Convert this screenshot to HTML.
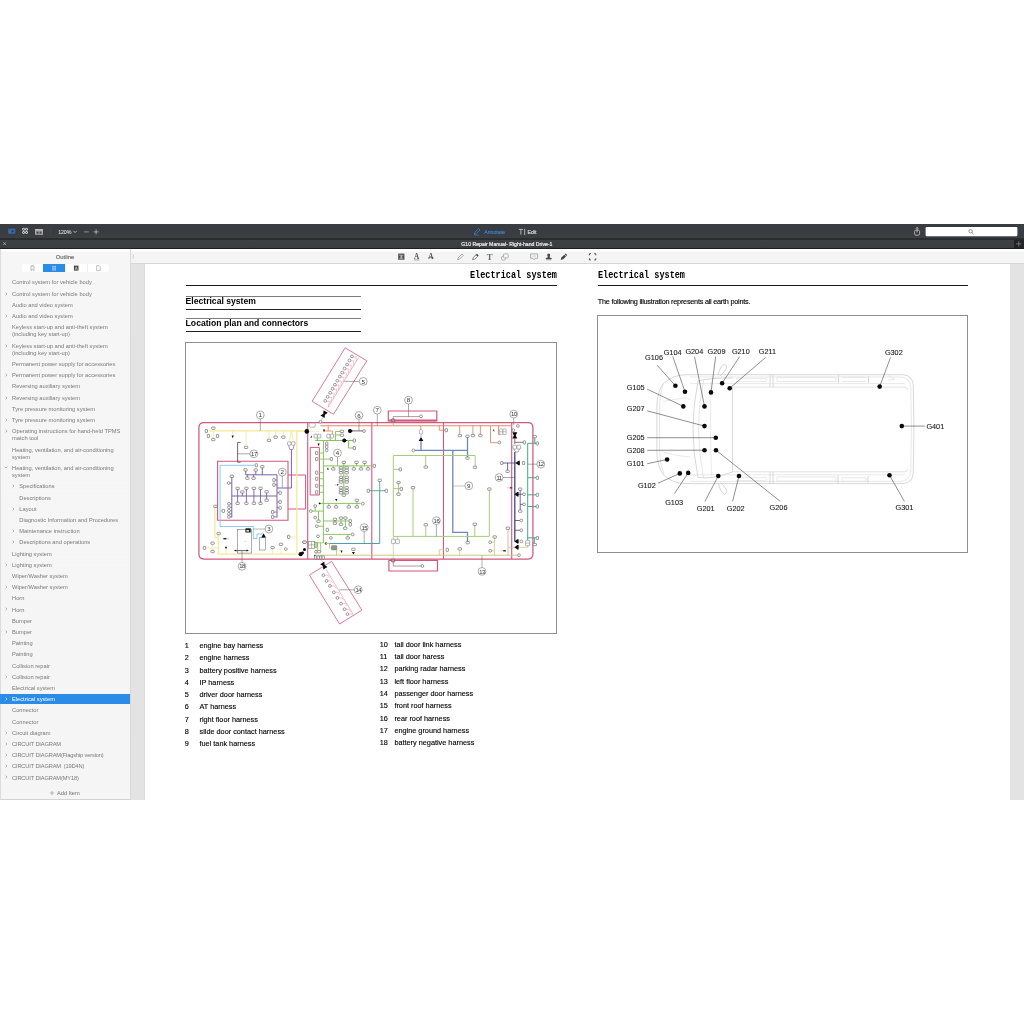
<!DOCTYPE html>
<html><head><meta charset="utf-8"><title>G10 Repair Manual</title>
<style>
html,body{margin:0;padding:0;background:#fff;}
body{width:1024px;height:1024px;position:relative;overflow:hidden;font-family:"Liberation Sans",sans-serif;}
.abs{position:absolute;}
#tb{position:absolute;left:0;top:224px;width:1024px;height:14.6px;background:linear-gradient(#393c40 0,#393c40 70%,#3d4143 100%);}
#tbsep{position:absolute;left:0;top:238.4px;width:1024px;height:1.3px;background:#2a2d2e;}
#tabs{position:absolute;left:0;top:239.7px;width:1024px;height:8.3px;background:linear-gradient(#3d4144,#3b3c40);}
#tabsep{position:absolute;left:0;top:247.8px;width:1024px;height:1px;background:#1f1f24;}
#side{position:absolute;left:0;top:248.8px;width:130.5px;height:551px;background:linear-gradient(#fff 0,#fff 2.2px,#f6f6f6 3.2px,#f5f5f5 100%);border-bottom:0.7px solid #d4d4d4;border-right:0.6px solid #d8d8d8;box-sizing:border-box;border-left:1px solid #dcdcdc;}
#gut{position:absolute;left:130.4px;top:263.8px;width:14.3px;box-sizing:border-box;border-right:1px solid #d9d9d9;height:536.2px;background:#e3e3e3;}
#gutr{position:absolute;left:1009.6px;top:263.8px;width:14.4px;height:536.2px;background:#e3e3e3;}
#atb{position:absolute;left:130.4px;top:248.8px;width:893.6px;height:15px;background:linear-gradient(#fff 0,#fff 2.2px,#f4f4f5 3px,#f4f4f5 100%);border-bottom:0.6px solid #d6d6d6;box-sizing:border-box;}
#doc{position:absolute;left:144.5px;top:263.8px;width:865px;height:536.2px;background:#fff;}
.row{position:absolute;left:0;width:129px;height:11.2px;line-height:11.2px;font-size:5.72px;color:#7a7a7a;white-space:nowrap;}
.row span{position:absolute;left:12px;top:0;}
.row.i2 span{left:19.3px;}
.row.d{height:18.67px;}
.row.d span{line-height:7.45px;top:1.9px;}
.row .ch{position:absolute;left:4.6px;top:0;font-size:4px;color:#8a8a8a;}
.row.i2 .ch{left:12px;}
.row.sel{background:#2a8be8;color:#fff;}
.row.sel .ch{color:#fff;}
.t{position:absolute;white-space:nowrap;color:#000;}
#wrap{position:absolute;left:0;top:0;width:1024px;height:1024px;will-change:transform;}
.st{position:absolute;white-space:nowrap;font-size:5.72px;line-height:11.2px;height:11.2px;}
</style></head><body><div id="wrap">
<div id="tb"></div><div id="tbsep"></div><div id="tabs"></div><div id="tabsep"></div>
<!-- top toolbar icons -->
<svg class="abs" style="left:0;top:224px" width="1024" height="25" viewBox="0 224 1024 25">
 <!-- sidebar icon (blue) -->
 <rect x="8" y="228.6" width="7.5" height="5.5" rx="0.8" fill="#325f94"/>
 <rect x="8.9" y="229.6" width="5.8" height="0.7" fill="#4f7fb5" opacity="0.8"/><rect x="8.9" y="231" width="2.2" height="0.7" fill="#4f7fb5" opacity="0.8"/><rect x="8.9" y="232.4" width="5.8" height="0.7" fill="#4f7fb5" opacity="0.7"/>
 <rect x="11.7" y="230.3" width="1.3" height="2.1" fill="#1d3558"/>
 <!-- grid icon -->
 <g fill="none" stroke="#cdcdcd" stroke-width="0.95">
  <rect x="22.6" y="228.3" width="1.9" height="1.9" rx="0.3"/><rect x="25.6" y="228.3" width="1.9" height="1.9" rx="0.3"/>
  <rect x="22.6" y="231.5" width="1.9" height="1.9" rx="0.3"/><rect x="25.6" y="231.5" width="1.9" height="1.9" rx="0.3"/>
 </g>
 <!-- two page icon -->
 <rect x="35" y="229" width="8" height="5.8" fill="#a9a9a9"/>
 <rect x="35" y="229" width="8" height="1.2" fill="#bcbcbc"/>
 <rect x="36.5" y="231.5" width="2.1" height="2.2" fill="#45484b"/><rect x="39.5" y="231.5" width="2.1" height="2.2" fill="#45484b"/>
 <rect x="50.6" y="227" width="0.5" height="9" fill="#4b4e51"/>
 <!-- chevron -->
 <path d="M73.4 230.9 L75.1 232.6 L76.8 230.9" fill="none" stroke="#d0d0d0" stroke-width="0.8"/>
 <!-- minus plus -->
 <path d="M84 231.9 H88.8" stroke="#b4b4b4" stroke-width="0.7"/>
 <path d="M93.6 231.9 H98.6 M96.1 229.4 V234.4" stroke="#cfcfcf" stroke-width="0.7"/>
 <!-- annotate pencil -->
 <path d="M474.3 234.3 L474.9 232.2 L478.6 228.6 L480 230 L476.4 233.7 Z" fill="none" stroke="#3b7fc8" stroke-width="0.8" stroke-linejoin="round"/>
 <path d="M474 235.1 H479" stroke="#3b7fc8" stroke-width="0.6"/>
 <!-- T| -->
 <path d="M518.8 229.4 H523 M520.9 229.4 V234.6 M524.7 228.8 V235" stroke="#d4d4d4" stroke-width="0.8" fill="none"/>
 <!-- share -->
 <rect x="914.6" y="230.2" width="5" height="5" rx="1.4" fill="none" stroke="#c6c6c6" stroke-width="0.8"/>
 <path d="M917.1 227.4 V232.4 M915.8 228.7 L917.1 227.4 L918.4 228.7" stroke="#c6c6c6" stroke-width="0.8" fill="none"/>
 <!-- search box -->
 <rect x="925.6" y="226.9" width="91.8" height="9.3" rx="1.2" fill="#fff"/>
 <circle cx="970.6" cy="231.2" r="1.7" fill="none" stroke="#6a6a6a" stroke-width="0.7"/>
 <path d="M971.9 232.5 L973.6 234.2" stroke="#6a6a6a" stroke-width="0.8"/>
 <!-- tab close x -->
 <path d="M3.3 242.3 L6 245 M6 242.3 L3.3 245" stroke="#c2c2c2" stroke-width="0.7"/>
 <!-- tab plus -->
 <rect x="1014" y="239.7" width="10" height="8.2" fill="#222426"/>
 <path d="M1016.3 243.9 H1021.3 M1018.8 241.4 V246.4" stroke="#858585" stroke-width="0.8"/>
</svg>
<div class="t" style="left:58.2px;top:229px;font-size:5.3px;line-height:7px;color:#e0e0e0;letter-spacing:-0.12px;-webkit-text-stroke:0.06px #e0e0e0">120%</div>
<div class="t" style="left:484.2px;top:229px;font-size:5.2px;line-height:7px;color:#3b7fc8;-webkit-text-stroke:0.2px #3b7fc8;">Annotate</div>
<div class="t" style="left:527.6px;top:229px;font-size:5.2px;line-height:7px;color:#d4d4d4;-webkit-text-stroke:0.2px #d4d4d4;">Edit</div>
<div class="t" style="left:461.3px;top:240.8px;font-size:5.17px;line-height:7px;color:#f0f0f0;-webkit-text-stroke:0.18px #f0f0f0;">G10 Repair Manual- Right-hand Drive-1</div>
<div id="atb"></div>
<svg class="abs" style="left:130px;top:249px" width="894" height="15" viewBox="130 249 894 15">
 <!-- grip -->
 <path d="M133.2 254.3 V258.6" stroke="#c4c4c4" stroke-width="0.7"/>
 <!-- highlight box -->
 <rect x="398.2" y="253.6" width="6.2" height="6.2" fill="#4a4a4a"/>
 <path d="M399.2 255.2 H403.4 M400 257 H402.6 M401.3 255.2 V258.6 M399.3 258.8 H403.3" stroke="#f3f3f3" stroke-width="0.6"/>
 <!-- A underline -->
 <text x="416.6" y="259" font-family="Liberation Serif" font-weight="bold" font-size="7.2" text-anchor="middle" fill="#505050">A</text>
 <path d="M414 259.9 H419.2" stroke="#505050" stroke-width="0.5"/>
 <!-- A strike -->
 <text x="430.9" y="259.4" font-family="Liberation Serif" font-weight="bold" font-size="7.2" text-anchor="middle" fill="#505050">A</text>
 <path d="M428.2 257.5 H433.6" stroke="#505050" stroke-width="0.6"/>
 <!-- pencil -->
 <path d="M457.6 259.8 L458 258 L462 254 L463.3 255.3 L459.3 259.3 Z" fill="none" stroke="#8a8a8a" stroke-width="0.65" stroke-linejoin="round"/>
 <!-- marker -->
 <path d="M472.7 259.7 L473.1 257.7 L476 254.8 L477.6 256.4 L474.7 259.3 Z" fill="none" stroke="#555" stroke-width="0.7" stroke-linejoin="round"/>
 <path d="M476 254.8 L477 253.8 L478.6 255.4 L477.6 256.4 Z" fill="#444"/>
 <!-- T -->
 <text x="489.7" y="260" font-family="Liberation Serif" font-weight="bold" font-size="8.6" text-anchor="middle" fill="#6a6a6a">T</text>
 <!-- shapes -->
 <circle cx="503.5" cy="258.1" r="2.2" fill="none" stroke="#8a8a8a" stroke-width="0.6"/>
 <rect x="503.6" y="253.9" width="4.6" height="4" rx="0.6" fill="#f6f6f6" stroke="#8a8a8a" stroke-width="0.6"/>
 <!-- comment -->
 <path d="M530.6 253.9 H537.6 V258.3 H535.2 L534.1 259.8 L533 258.3 H530.6 Z" fill="none" stroke="#8a8a8a" stroke-width="0.65" stroke-linejoin="round"/>
 <path d="M532.4 256.1 H535.8" stroke="#aaa" stroke-width="0.5"/>
 <!-- stamp -->
 <circle cx="548.7" cy="255.1" r="1.5" fill="#4a4a4a"/>
 <path d="M547.8 256 H549.6 L550 258 H547.4 Z" fill="#4a4a4a"/>
 <rect x="545.8" y="257.8" width="5.8" height="1.3" fill="#4a4a4a"/><rect x="546.2" y="259.6" width="5" height="0.5" fill="#4a4a4a"/>
 <!-- sign pen -->
 <path d="M560.7 259.9 L561.4 257.6 L564.3 254.7 L566 256.4 L563.1 259.3 Z" fill="#444"/>
 <path d="M564.6 254.3 L565.6 253.4 L567.2 255 L566.3 256 Z" fill="#444"/>
 <!-- select -->
 <g stroke="#3e3e3e" stroke-width="0.9" fill="none">
  <path d="M589.4 255.3 V253.7 H591 M594.2 253.7 H595.8 V255.3 M595.8 258.3 V259.9 H594.2 M591 259.9 H589.4 V258.3"/>
 </g>
</svg>
<div id="gut"></div><div id="gutr"></div><div id="doc"></div>
<div id="side"></div>
<div class="t" style="left:55.8px;top:253.6px;font-size:5.8px;line-height:7px;color:#5a5a5a;-webkit-text-stroke:0.1px #5a5a5a;">Outline</div>
<div class="abs" style="left:22px;top:264.2px;width:86.6px;height:8px;background:#fff;border-radius:1.2px;box-shadow:0 0 0.6px #cfcfcf;"></div>
<div class="abs" style="left:43.2px;top:264.2px;width:21.8px;height:8px;background:#2a8be8;"></div>
<div class="abs" style="left:65px;top:264.2px;width:0.5px;height:8px;background:#efefef;"></div><div class="abs" style="left:86.8px;top:264.2px;width:0.5px;height:8px;background:#efefef;"></div>
<svg class="abs" style="left:22px;top:264px" width="87" height="9" viewBox="22 264 87 9">
<path d="M31 265.8 H34 V270.6 L32.5 269.5 L31 270.6 Z" fill="none" stroke="#8a8a8a" stroke-width="0.6"/>
<path d="M52.2 266.5 H56 M52.2 268.2 H56 M52.2 269.9 H56 M53 265.8 V270.6 M55.2 265.8 V270.6" stroke="#cfe4fa" stroke-width="0.55" fill="none"/>
<rect x="73.9" y="265.6" width="4.6" height="5" fill="#444"/><path d="M75 269.9 L76.2 266.7 L77.4 269.9 M75.5 268.8 H76.9" stroke="#fff" stroke-width="0.5" fill="none"/>
<path d="M96.6 265.7 H99 L100.2 266.9 V270.6 H96.6 Z" fill="none" stroke="#9a9a9a" stroke-width="0.6"/>
</svg>
<div class="st" style="left:12px;top:277px;color:#7a7a7a">Control system for vehicle body</div>
<div class="st" style="left:12px;top:289px;color:#7a7a7a">Control system for vehicle body</div>
<svg class="abs" style="left:4.6px;top:291.60px" width="3" height="4" viewBox="0 0 3 4"><path d="M0.6 0.6 L2 2 L0.6 3.4" fill="none" stroke="#8a8a8a" stroke-width="0.6"/></svg>
<div class="st" style="left:12px;top:300px;color:#7a7a7a">Audio and video system</div>
<div class="st" style="left:12px;top:311px;color:#7a7a7a">Audio and video system</div>
<svg class="abs" style="left:4.6px;top:314.00px" width="3" height="4" viewBox="0 0 3 4"><path d="M0.6 0.6 L2 2 L0.6 3.4" fill="none" stroke="#8a8a8a" stroke-width="0.6"/></svg>
<div class="st" style="left:12px;top:322px;color:#7a7a7a">Keyless start-up and anti-theft system</div>
<div class="st" style="left:12px;top:329px;color:#7a7a7a">(including key start-up)</div>
<div class="st" style="left:12px;top:341px;color:#7a7a7a">Keyless start-up and anti-theft system</div>
<div class="st" style="left:12px;top:348px;color:#7a7a7a">(including key start-up)</div>
<svg class="abs" style="left:4.6px;top:343.57px" width="3" height="4" viewBox="0 0 3 4"><path d="M0.6 0.6 L2 2 L0.6 3.4" fill="none" stroke="#8a8a8a" stroke-width="0.6"/></svg>
<div class="st" style="left:12px;top:359px;color:#7a7a7a">Permanent power supply for accessories</div>
<div class="st" style="left:12px;top:370px;color:#7a7a7a">Permanent power supply for accessories</div>
<svg class="abs" style="left:4.6px;top:373.14px" width="3" height="4" viewBox="0 0 3 4"><path d="M0.6 0.6 L2 2 L0.6 3.4" fill="none" stroke="#8a8a8a" stroke-width="0.6"/></svg>
<div class="st" style="left:12px;top:381px;color:#7a7a7a">Reversing auxiliary system</div>
<div class="st" style="left:12px;top:393px;color:#7a7a7a">Reversing auxiliary system</div>
<svg class="abs" style="left:4.6px;top:395.54px" width="3" height="4" viewBox="0 0 3 4"><path d="M0.6 0.6 L2 2 L0.6 3.4" fill="none" stroke="#8a8a8a" stroke-width="0.6"/></svg>
<div class="st" style="left:12px;top:404px;color:#7a7a7a">Tyre pressure monitoring system</div>
<div class="st" style="left:12px;top:415px;color:#7a7a7a">Tyre pressure monitoring system</div>
<svg class="abs" style="left:4.6px;top:417.94px" width="3" height="4" viewBox="0 0 3 4"><path d="M0.6 0.6 L2 2 L0.6 3.4" fill="none" stroke="#8a8a8a" stroke-width="0.6"/></svg>
<div class="st" style="left:12px;top:426px;color:#7a7a7a">Operating instructions for hand-held TPMS</div>
<div class="st" style="left:12px;top:433px;color:#7a7a7a">match tool</div>
<svg class="abs" style="left:4.6px;top:429.14px" width="3" height="4" viewBox="0 0 3 4"><path d="M0.6 0.6 L2 2 L0.6 3.4" fill="none" stroke="#8a8a8a" stroke-width="0.6"/></svg>
<div class="st" style="left:12px;top:445px;color:#7a7a7a">Heating, ventilation, and air-conditioning</div>
<div class="st" style="left:12px;top:452px;color:#7a7a7a">system</div>
<div class="st" style="left:12px;top:463px;color:#7a7a7a">Heating, ventilation, and air-conditioning</div>
<div class="st" style="left:12px;top:470px;color:#7a7a7a">system</div>
<svg class="abs" style="left:3.8999999999999995px;top:466.38px" width="4" height="3" viewBox="0 0 4 3"><path d="M0.6 0.6 L2 2 L3.4 0.6" fill="none" stroke="#8a8a8a" stroke-width="0.6"/></svg>
<div class="st" style="left:19.3px;top:481px;color:#7a7a7a">Specifications</div>
<svg class="abs" style="left:12px;top:484.25px" width="3" height="4" viewBox="0 0 3 4"><path d="M0.6 0.6 L2 2 L0.6 3.4" fill="none" stroke="#8a8a8a" stroke-width="0.6"/></svg>
<div class="st" style="left:19.3px;top:493px;color:#7a7a7a">Descriptions</div>
<div class="st" style="left:19.3px;top:504px;color:#7a7a7a">Layout</div>
<svg class="abs" style="left:12px;top:506.65px" width="3" height="4" viewBox="0 0 3 4"><path d="M0.6 0.6 L2 2 L0.6 3.4" fill="none" stroke="#8a8a8a" stroke-width="0.6"/></svg>
<div class="st" style="left:19.3px;top:515px;color:#7a7a7a">Diagnostic Information and Procedures</div>
<div class="st" style="left:19.3px;top:526px;color:#7a7a7a">Maintenance instruction</div>
<svg class="abs" style="left:12px;top:529.05px" width="3" height="4" viewBox="0 0 3 4"><path d="M0.6 0.6 L2 2 L0.6 3.4" fill="none" stroke="#8a8a8a" stroke-width="0.6"/></svg>
<div class="st" style="left:19.3px;top:537px;color:#7a7a7a">Descriptions and operations</div>
<svg class="abs" style="left:12px;top:540.25px" width="3" height="4" viewBox="0 0 3 4"><path d="M0.6 0.6 L2 2 L0.6 3.4" fill="none" stroke="#8a8a8a" stroke-width="0.6"/></svg>
<div class="st" style="left:12px;top:549px;color:#7a7a7a">Lighting system</div>
<div class="st" style="left:12px;top:560px;color:#7a7a7a">Lighting system</div>
<svg class="abs" style="left:4.6px;top:562.65px" width="3" height="4" viewBox="0 0 3 4"><path d="M0.6 0.6 L2 2 L0.6 3.4" fill="none" stroke="#8a8a8a" stroke-width="0.6"/></svg>
<div class="st" style="left:12px;top:571px;color:#7a7a7a">Wiper/Washer system</div>
<div class="st" style="left:12px;top:582px;color:#7a7a7a">Wiper/Washer system</div>
<svg class="abs" style="left:4.6px;top:585.05px" width="3" height="4" viewBox="0 0 3 4"><path d="M0.6 0.6 L2 2 L0.6 3.4" fill="none" stroke="#8a8a8a" stroke-width="0.6"/></svg>
<div class="st" style="left:12px;top:593px;color:#7a7a7a">Horn</div>
<div class="st" style="left:12px;top:605px;color:#7a7a7a">Horn</div>
<svg class="abs" style="left:4.6px;top:607.45px" width="3" height="4" viewBox="0 0 3 4"><path d="M0.6 0.6 L2 2 L0.6 3.4" fill="none" stroke="#8a8a8a" stroke-width="0.6"/></svg>
<div class="st" style="left:12px;top:616px;color:#7a7a7a">Bumper</div>
<div class="st" style="left:12px;top:627px;color:#7a7a7a">Bumper</div>
<svg class="abs" style="left:4.6px;top:629.85px" width="3" height="4" viewBox="0 0 3 4"><path d="M0.6 0.6 L2 2 L0.6 3.4" fill="none" stroke="#8a8a8a" stroke-width="0.6"/></svg>
<div class="st" style="left:12px;top:638px;color:#7a7a7a">Painting</div>
<div class="st" style="left:12px;top:649px;color:#7a7a7a">Painting</div>
<div class="st" style="left:12px;top:661px;color:#7a7a7a">Collision repair</div>
<div class="st" style="left:12px;top:672px;color:#7a7a7a">Collision repair</div>
<svg class="abs" style="left:4.6px;top:674.65px" width="3" height="4" viewBox="0 0 3 4"><path d="M0.6 0.6 L2 2 L0.6 3.4" fill="none" stroke="#8a8a8a" stroke-width="0.6"/></svg>
<div class="st" style="left:12px;top:683px;color:#7a7a7a">Electrical system</div>
<div class="abs" style="left:0;top:694.05px;width:129.6px;height:10px;background:#2a8be8;"></div>
<div class="st" style="left:12px;top:694px;color:#fff">Electrical system</div>
<svg class="abs" style="left:4.6px;top:697.05px" width="3" height="4" viewBox="0 0 3 4"><path d="M0.6 0.6 L2 2 L0.6 3.4" fill="none" stroke="#fff" stroke-width="0.6"/></svg>
<div class="st" style="left:12px;top:705px;color:#7a7a7a">Connector</div>
<div class="st" style="left:12px;top:717px;color:#7a7a7a">Connector</div>
<div class="st" style="left:12px;top:728px;color:#7a7a7a">Circuit diagram</div>
<svg class="abs" style="left:4.6px;top:730.65px" width="3" height="4" viewBox="0 0 3 4"><path d="M0.6 0.6 L2 2 L0.6 3.4" fill="none" stroke="#8a8a8a" stroke-width="0.6"/></svg>
<div class="st" style="left:12px;top:739px;color:#7a7a7a;letter-spacing:-0.16px">CIRCUIT DIAGRAM</div>
<svg class="abs" style="left:4.6px;top:741.85px" width="3" height="4" viewBox="0 0 3 4"><path d="M0.6 0.6 L2 2 L0.6 3.4" fill="none" stroke="#8a8a8a" stroke-width="0.6"/></svg>
<div class="st" style="left:12px;top:750px;color:#7a7a7a;letter-spacing:-0.16px">CIRCUIT DIAGRAM(Flagship version)</div>
<svg class="abs" style="left:4.6px;top:753.05px" width="3" height="4" viewBox="0 0 3 4"><path d="M0.6 0.6 L2 2 L0.6 3.4" fill="none" stroke="#8a8a8a" stroke-width="0.6"/></svg>
<div class="st" style="left:12px;top:761px;color:#7a7a7a;letter-spacing:-0.16px">CIRCUIT DIAGRAM&nbsp;&nbsp;(19D4N)</div>
<svg class="abs" style="left:4.6px;top:764.25px" width="3" height="4" viewBox="0 0 3 4"><path d="M0.6 0.6 L2 2 L0.6 3.4" fill="none" stroke="#8a8a8a" stroke-width="0.6"/></svg>
<div class="st" style="left:12px;top:773px;color:#7a7a7a;letter-spacing:-0.16px">CIRCUIT DIAGRAM(MY18)</div>
<svg class="abs" style="left:4.6px;top:775.45px" width="3" height="4" viewBox="0 0 3 4"><path d="M0.6 0.6 L2 2 L0.6 3.4" fill="none" stroke="#8a8a8a" stroke-width="0.6"/></svg>
<svg class="abs" style="left:49px;top:790px" width="6" height="6" viewBox="0 0 6 6"><path d="M0.8 3 H5.2 M3 0.8 V5.2" stroke="#8a8a8a" stroke-width="0.55"/></svg>
<div class="t" style="left:57px;top:789.6px;font-size:5.7px;line-height:7px;color:#707070;">Add Item</div>
<!-- page 1 -->
<div class="t" style="left:469.8px;top:269.4px;font-family:'Liberation Mono',monospace;font-weight:bold;font-size:10.3px;line-height:12px;transform:scaleX(0.828);transform-origin:0 0;">Electrical system</div>
<div class="abs" style="left:185.6px;top:284.9px;width:371px;height:1.6px;background:#1a1a1a;"></div>
<div class="abs" style="left:185.6px;top:296.3px;width:175.8px;height:0.9px;background:#7c7c7c;"></div>
<div class="t" style="left:185.6px;top:296.3px;font-size:8.6px;font-weight:bold;line-height:11px;">Electrical system</div>
<div class="abs" style="left:185.6px;top:309.1px;width:175.8px;height:0.7px;background:#222;"></div>
<div class="abs" style="left:185.6px;top:318.3px;width:175.8px;height:0.9px;background:#7c7c7c;"></div>
<div class="t" style="left:185.6px;top:318.3px;font-size:8.65px;font-weight:bold;line-height:11px;">Location plan and connectors</div>
<div class="abs" style="left:185.6px;top:331.2px;width:175.8px;height:0.7px;background:#222;"></div>
<div class="abs" style="left:185.2px;top:342.2px;width:371.6px;height:291.8px;box-sizing:border-box;border:0.9px solid #8e8e8e;"></div>
<svg class="abs" style="left:186px;top:343px" width="370" height="290" viewBox="186 343 370 290">
<path d="M204 422.5 H528 Q532.9 422.5 532.9 427.5 V554 Q532.9 559 528 559 H204 Q198.9 559 198.9 554 V427.5 Q198.9 422.5 204 422.5 Z" fill="none" stroke="#d3577f" stroke-width="1.25" />
<path d="M307.7 422.5 V559 M371.8 422.5 V559 M443.5 422.5 V559 M511.7 422.5 V559" fill="none" stroke="#d3577f" stroke-width="1.1" />
<path d="M217.6 461.3 H288 V520.3 H217.6 Z" fill="none" stroke="#d3577f" stroke-width="1.1" />
<path d="M288 475 H305.6 V509 H288" fill="none" stroke="#d3577f" stroke-width="1.0" />
<path d="M310.2 447.4 H319.4 V495 H310.2 Z" fill="none" stroke="#d3577f" stroke-width="1.0" />
<path d="M388.3 411 H436.8 V420.9 H388.3 Z" fill="none" stroke="#d3577f" stroke-width="1.2" />
<path d="M388.3 420.4 H436.8" fill="none" stroke="#d3577f" stroke-width="1.8" />
<path d="M388.9 560.4 H437.5 V571 H388.9 Z" fill="none" stroke="#d3577f" stroke-width="1.2" />
<path d="M345.2 347.8 L366.8 360.8 L333.5 414.2 L312.1 401.3 Z" fill="none" stroke="#d3577f" stroke-width="0.8" />
<path d="M331.6 561.4 L361.9 610.1 L339.6 624 L309.4 575 Z" fill="none" stroke="#d3577f" stroke-width="0.8" />
<path d="M358.5 357.6 L328 407.4" fill="none" stroke="#e88aa0" stroke-width="0.6" />
<path d="M352.9 357.0 L356.1 356.8 L356.2 361.3" fill="none" stroke="#e88aa0" stroke-width="0.5" />
<path d="M350.5 361.0 L353.7 360.8 L353.7 365.5" fill="none" stroke="#e88aa0" stroke-width="0.5" />
<path d="M348.0 365.1 L351.2 364.9 L351.1 369.6" fill="none" stroke="#e88aa0" stroke-width="0.5" />
<path d="M345.6 369.1 L348.8 368.9 L348.6 373.8" fill="none" stroke="#e88aa0" stroke-width="0.5" />
<path d="M343.2 373.2 L346.4 373.0 L346.0 377.9" fill="none" stroke="#e88aa0" stroke-width="0.5" />
<path d="M340.8 377.2 L344.0 377.0 L343.5 382.1" fill="none" stroke="#e88aa0" stroke-width="0.5" />
<path d="M338.3 381.3 L341.5 381.1 L341.0 386.2" fill="none" stroke="#e88aa0" stroke-width="0.5" />
<path d="M335.9 385.3 L339.1 385.1 L338.4 390.4" fill="none" stroke="#e88aa0" stroke-width="0.5" />
<path d="M333.5 389.4 L336.7 389.2 L335.9 394.5" fill="none" stroke="#e88aa0" stroke-width="0.5" />
<path d="M331.1 393.4 L334.3 393.2 L333.3 398.7" fill="none" stroke="#e88aa0" stroke-width="0.5" />
<path d="M328.6 397.5 L331.8 397.3 L330.8 402.8" fill="none" stroke="#e88aa0" stroke-width="0.5" />
<path d="M326.2 401.5 L329.4 401.3 L328.3 407.0" fill="none" stroke="#e88aa0" stroke-width="0.5" />
<path d="M326 569.3 L353.2 614.3" fill="none" stroke="#e88aa0" stroke-width="0.6" />
<path d="M324.4 575.2 H327.9 l1.6 2.4" fill="none" stroke="#e88aa0" stroke-width="0.5" />
<path d="M327.5 580.9 H331.0 l1.6 2.4" fill="none" stroke="#e88aa0" stroke-width="0.5" />
<path d="M330.9 585.9 H334.4 l1.6 2.4" fill="none" stroke="#e88aa0" stroke-width="0.5" />
<path d="M334.8 592.3 H338.3 l1.6 2.4" fill="none" stroke="#e88aa0" stroke-width="0.5" />
<path d="M338.4 597.9 H341.9 l1.6 2.4" fill="none" stroke="#e88aa0" stroke-width="0.5" />
<path d="M342.0 603.6 H345.5 l1.6 2.4" fill="none" stroke="#e88aa0" stroke-width="0.5" />
<path d="M345.5 609.2 H349.0 l1.6 2.4" fill="none" stroke="#e88aa0" stroke-width="0.5" />
<path d="M348.4 614.1 H351.9 l1.6 2.4" fill="none" stroke="#e88aa0" stroke-width="0.5" />
<path d="M209.5 430.9 H306 M296.8 430.9 V554 M218.4 554 H296.8 M218.5 535 V554 M214.9 507 V537.5 H218.5" fill="none" stroke="#f4e89a" stroke-width="1.25" />
<path d="M232.6 431 V434 M246 431 V445 M268.9 431 V438.5 M275.6 431 V435.5 M283.3 431 V435.5 M291.4 431 L289.4 441 M291.4 431 L293.2 441 M213.3 429 V439" fill="none" stroke="#f4e89a" stroke-width="0.9" />
<path d="M281 546 V554 M272.6 549 V554 M288.6 537 H296.8 M206 547.9 H218 M212.6 543.1 V551.5 M226 550 V554 M300 542 H304" fill="none" stroke="#f4e89a" stroke-width="0.8" />
<path d="M296 431.4 H320 M318 536 V554" fill="none" stroke="#f4e89a" stroke-width="0.9" stroke-dasharray="1.2 0.8"/>
<rect x="287.4" y="441.8" width="3.6" height="3.4" rx="0.8" fill="#fff" stroke="#666" stroke-width="0.5"/><rect x="291.4" y="441.8" width="3.6" height="3.4" rx="0.8" fill="#fff" stroke="#666" stroke-width="0.5"/>
<path d="M288.6 445.4 L289.8 449.6 H292.8 L294 445.4" fill="none" stroke="#7c60aa" stroke-width="0.7" />
<path d="M291.4 449.6 V488 H277" fill="none" stroke="#7c60aa" stroke-width="1.0" />
<path d="M237.6 442.5 V462.2 M237.6 442.5 H240.6 M237.6 462.2 H240.6" fill="none" stroke="#5a3a44" stroke-width="0.8" />
<path d="M237.6 453.8 H250" fill="none" stroke="#555" stroke-width="0.5" />
<path d="M254.5 465.3 H220.1 V526.5 H253.3 V538.5 H257 V534 H263.5 V536" fill="none" stroke="#7cc6ea" stroke-width="0.9" />
<path d="M220.1 510.9 H222" fill="none" stroke="#7cc6ea" stroke-width="0.8" />
<path d="M231.8 477 V517.5 M231.8 496 H277 M277 474.8 V517.5 M245.8 474.8 H277 M245.8 474.8 V470 M255.8 474.8 V470 M262.3 474.8 V467" fill="none" stroke="#7c60aa" stroke-width="1.0" />
<path d="M247.4 474.8 V478 M253.6 474.8 V478 M237.6 488.8 V503 M246.4 488.8 V503 M253.9 488.8 V503 M260.5 488.8 V503 M242.3 492.5 V496 M266.6 492 V500" fill="none" stroke="#7c60aa" stroke-width="0.9" />
<path d="M274 480 H277 M274 484.8 H277 M277 492.8 H280 M277 501.9 H280 M277 507.8 H280 M272.6 512.1 H277 M272.6 516.9 H277 M228.6 483.1 H231.8 M229 503.8 H231.8 M229 507.3 H231.8 M229 510.6 H231.8 M229 513.8 H231.8 M229 516.9 H231.8" fill="none" stroke="#7c60aa" stroke-width="0.8" />
<path d="M282.3 476 V487.5" fill="none" stroke="#555" stroke-width="0.5" />
<rect x="237.6" y="529.4" width="13.8" height="23.7" fill="#fff" stroke="#8a8a8a" stroke-width="0.7"/>
<rect x="245.4" y="528.2" width="5.4" height="4.4" rx="0.6" fill="#222"/><rect x="246.4" y="530" width="2.6" height="1.6" fill="#ddd"/>
<rect x="259.3" y="537.8" width="6.4" height="12.2" fill="#fff" stroke="#777" stroke-width="0.6"/>
<path d="M243.8 541.3 H247.2" fill="none" stroke="#bbb" stroke-width="0.4" />
<path d="M261.20000000000005 537.4 L263.6 533.4 L266.0 537.4 Z" fill="#0a0a0a"/>
<path d="M253.3 529 H265" fill="none" stroke="#888" stroke-width="0.6" />
<path d="M234.5 550.6 H248.3" fill="none" stroke="#222" stroke-width="0.7" />
<path d="M234.2 550.6 l2 -1 v2 Z M248.6 550.6 l-2 -1 v2 Z" fill="#111"/>
<path d="M242 550.6 V562.4" fill="none" stroke="#555" stroke-width="0.5" />
<rect x="223.4" y="538" width="3" height="1.4" fill="#222"/>
<path d="M226.4 538.7 H229" fill="none" stroke="#999" stroke-width="0.4" />
<path d="M224.9 546.8000000000001 H227.1 L226 549.4000000000001 Z" fill="#111"/>
<path d="M231.6 435.6 H233.79999999999998 L232.7 438.2 Z" fill="#111"/>
<circle cx="300.6" cy="554.2" r="2.1" fill="#0a0a0a"/>
<circle cx="302.6" cy="553" r="1.4" fill="#0a0a0a"/>
<circle cx="304.5" cy="549.4" r="1.5" fill="#0a0a0a"/>
<rect x="309.2" y="423" width="6" height="4.2" rx="1.2" fill="#fff" stroke="#888" stroke-width="0.6"/>
<circle cx="306.8" cy="431.4" r="2.3" fill="#0a0a0a"/>
<path d="M320.4 425.7 H512.2" fill="none" stroke="#ea8a66" stroke-width="1.1" />
<path d="M328.2 425.7 V431 M324 431 H332.6 V434.4" fill="none" stroke="#ea8a66" stroke-width="0.9" />
<path d="M350.4 430.9 H363" fill="none" stroke="#5a3a44" stroke-width="0.8" />
<circle cx="349.9" cy="431.1" r="2.0" fill="#0a0a0a"/>
<path d="M349.9 429 L352.8 431.1 L349.9 433.2 Z" fill="#0a0a0a"/>
<rect x="314.0" y="434.2" width="3.2" height="3.8" rx="0.8" fill="#fff" stroke="#666" stroke-width="0.5"/><rect x="317.59999999999997" y="434.2" width="3.2" height="3.8" rx="0.8" fill="#fff" stroke="#666" stroke-width="0.5"/>
<rect x="326.8" y="434.2" width="3.2" height="3.8" rx="0.8" fill="#fff" stroke="#666" stroke-width="0.5"/><rect x="330.4" y="434.2" width="3.2" height="3.8" rx="0.8" fill="#fff" stroke="#666" stroke-width="0.5"/>
<path d="M315.2 440.5 H342.5 M346 440.5 H353.2 M348.5 440.5 V448 H353.2 M335.4 431.4 V440.5 M335.4 431.4 H340.6 M335.4 434.9 H340.6 M323.4 440.5 V542.8 M317.4 438 V440.5 M330.2 438 V440.5" fill="none" stroke="#84c458" stroke-width="1.0" />
<circle cx="344.2" cy="440.5" r="2.0" fill="#0a0a0a"/>
<path d="M344.2 438.4 L347.2 440.5 L344.2 442.6 Z" fill="#0a0a0a"/>
<path d="M317.5 443.6 H319.70000000000005 L318.6 446.2 Z" fill="#111"/>
<path d="M322.9 429.6 H325.1 L324 432.2 Z" fill="#111"/>
<path d="M311.3 435.6 l0.9 1.8 h-1.8 Z" fill="#111"/>
<path d="M319 453 H323.4 M319 459.1 H330 M319 472.7 H323.4 M319 478.8 H323.4 M319 485.8 H323.4 M319 492.3 H323.4" fill="none" stroke="#84c458" stroke-width="0.9" />
<path d="M337.5 457 V465.6" fill="none" stroke="#555" stroke-width="0.5" />
<path d="M323.4 465.9 H371 M343.8 463 V493.8 M356.5 463 V466 M364.6 463 V466 M333.3 466 V468 M353.8 466 V468 M361 466 V468 M367.9 466 V468" fill="none" stroke="#84c458" stroke-width="1.0" />
<path d="M327.9 467.6 l1 2 h-2 Z" fill="#111"/>
<path d="M338.9 484.8 l-1.8 -0.9 v1.8 Z" fill="#111"/>
<path d="M334.6 484.8 H337.2" fill="none" stroke="#777" stroke-width="0.4" />
<path d="M379.7 481 V490.7 M369 490.7 H386" fill="none" stroke="#46a884" stroke-width="0.9" />
<path d="M379.7 490.7 V543.5 H326" fill="none" stroke="#4b9fae" stroke-width="1.0" />
<path d="M319.4 503.4 H360.7 M310.8 511.1 H323.4 M318.5 511.1 V520 M315.2 506 V511 M316.8 526.2 H323.4 M323.4 521 H349.9 M341 518 V524 M345.4 518 V528 M323.4 534.4 H351.3 M347.8 534.4 V537 M356.9 500.6 V506.4 M328.8 503.4 V506 M336 503.4 V506 M348.8 503.4 V506 M334.9 519.4 V523.3 M350.2 521 V524.5" fill="none" stroke="#84c458" stroke-width="0.95" />
<path d="M335.2 499.0 H337.40000000000003 L336.3 501.59999999999997 Z" fill="#111"/>
<circle cx="319.6" cy="503.4" r="0.9" fill="#111"/><circle cx="326" cy="543.5" r="1.2" fill="#3a6a3a"/>
<path d="M364.2 531.5 V543.5" fill="none" stroke="#555" stroke-width="0.5" />
<path d="M314.8 555.2 H517.4" fill="none" stroke="#cbc97c" stroke-width="1.0" />
<path d="M336.5 545.6 V555.2 M326 543.5 H329.5 V548 H332" fill="none" stroke="#cbc97c" stroke-width="0.9" />
<path d="M315.5 542.8 H323.4 M317.3 542.8 V552 M320.6 542.8 V552" fill="none" stroke="#84c458" stroke-width="0.8" />
<rect x="331.4" y="545.6" width="5.4" height="4.4" rx="0.8" fill="#8a9a86" stroke="#6a7a66" stroke-width="0.4"/>
<rect x="308.4" y="541.6" width="6.4" height="6.6" fill="#fff" stroke="#777" stroke-width="0.6"/><path d="M308.4 544.9 H314.8 M311.6 541.6 V548.2" stroke="#777" stroke-width="0.5"/>
<rect x="314.8" y="542.2" width="3" height="5.6" fill="#b4dc8c" stroke="#777" stroke-width="0.4"/>
<path d="M340.4 550.4 H342.6 L341.5 553.0 Z" fill="#111"/>
<path d="M351.9 552 h3 l-1.5 2.4 Z" fill="#111"/>
<path d="M314.8 554.6 l0.9 1.6 h-1.8 Z" fill="#111"/>
<path d="M393.2 419 V416.6 H420.2" fill="none" stroke="#a08080" stroke-width="0.8" />
<path d="M393.2 425.7 V420.4" fill="none" stroke="#ea8a66" stroke-width="0.8" />
<path d="M393.3 561 V566 H421.4" fill="none" stroke="#a08080" stroke-width="0.8" />
<path d="M393.3 543.6 V560" fill="none" stroke="#cbc97c" stroke-width="0.7" />
<path d="M420.8 425.7 V430 M439.3 425.7 V430.2 H444.9 M459.7 425.7 V434.2 M472.9 425.7 V434.2 M480.4 425.7 V434.2 M490.5 425.7 V442.7 H497.7 M498.5 425.7 V434.7 H500" fill="none" stroke="#ea8a66" stroke-width="0.9" />
<rect x="419.4" y="429.6" width="3.2" height="4.4" rx="1" fill="#fff" stroke="#777" stroke-width="0.5"/>
<path d="M421 434 V437" fill="none" stroke="#9aa" stroke-width="0.8" />
<path d="M418.6 441.0 L421 437.0 L423.4 441.0 Z" fill="#0a0a0a"/>
<path d="M421 441 V450.4 M414.9 450.4 H467.5 M467.5 437 V457.7 M452.8 450.4 V532.4 H467.5 V542.3" fill="none" stroke="#7186bc" stroke-width="1.3" />
<path d="M393.3 536.4 V455.5 H475.2 V466 M425.7 455.5 V465.6 M393.3 469.4 H399 M393.3 488.6 H400 M398.5 483 V494 M413 488.4 V536.4 M393.3 536.4 H489.3 V489.4 M425.8 526 V536.4 M474.8 524.5 V536.4" fill="none" stroke="#a4cf78" stroke-width="1.0" />
<rect x="391.4" y="539.2" width="3.8" height="4.4" rx="0.8" fill="#fff" stroke="#666" stroke-width="0.5"/><rect x="395.6" y="539.2" width="3.8" height="4.4" rx="0.8" fill="#fff" stroke="#666" stroke-width="0.5"/>
<path d="M393.3 536.4 V539.2 M397.5 536.4 V539.2" fill="none" stroke="#a4cf78" stroke-width="0.7" />
<path d="M452.8 486 H464.8" fill="none" stroke="#999" stroke-width="0.6" />
<path d="M436.4 524.6 V536.4" fill="none" stroke="#555" stroke-width="0.5" />
<path d="M439.3 555.2 V549.8 H444 M459.8 550.5 V555.2 M494.4 537.2 V555.2 M490.4 542.2 H494.4 M490.4 550.8 H494.4" fill="none" stroke="#cbc97c" stroke-width="0.8" />
<path d="M508 528.8 V555.2" fill="none" stroke="#cdc8a4" stroke-width="1.1" />
<path d="M508 547.3 H527.7 V545.5" fill="none" stroke="#cbc97c" stroke-width="0.8" />
<rect x="503.2" y="550.1" width="2.6" height="1.4" fill="#222"/>
<path d="M500.4 550.8 H503.2" fill="none" stroke="#999" stroke-width="0.4" />
<path d="M482 555.5 V567.5" fill="none" stroke="#666" stroke-width="0.5" />
<rect x="499.6" y="428.8" width="3.2" height="5.8" rx="1" fill="#fff" stroke="#777" stroke-width="0.5"/><rect x="503" y="428.8" width="3.2" height="5.8" rx="1" fill="#fff" stroke="#777" stroke-width="0.5"/>
<path d="M499.6 431.7 H506.2" fill="none" stroke="#777" stroke-width="0.4" />
<path d="M493.7 429 l0.8 1.8 h-1.6 Z" fill="#111"/>
<path d="M492.5 431.4 H495" fill="none" stroke="#999" stroke-width="0.4" />
<path d="M513.7 418 V425" fill="none" stroke="#555" stroke-width="0.5" />
<g transform="translate(514.8 435.4) rotate(0) scale(0.95)"><path d="M-2.6 -3.2 H2.6 L1 0 L2.6 3.2 H-2.6 L-1 0 Z" fill="#0a0a0a"/></g>
<path d="M514.8 438.6 V444 M514.8 442.3 H523" fill="none" stroke="#5a3a44" stroke-width="0.7" />
<rect x="513" y="445.2" width="3.6" height="3.8" rx="0.8" fill="#fff" stroke="#666" stroke-width="0.5"/><rect x="517" y="445.2" width="3.6" height="3.8" rx="0.8" fill="#fff" stroke="#666" stroke-width="0.5"/>
<path d="M514 449 L515.6 452 H518 L519.6 449" fill="none" stroke="#667" stroke-width="0.6" />
<path d="M514.8 452 V541.4" fill="none" stroke="#45457e" stroke-width="1.3" />
<path d="M501.7 463 H517 M507.6 463 V470.3 M514.8 520.5 H520 M514.8 530.3 H520 M520.2 489.6 V510.5 M520.2 504.4 H523 M518 494.3 H523" fill="none" stroke="#45457e" stroke-width="0.8" />
<path d="M515.6 463 L518.6 460.8 L519.8000000000001 460.8 L519.8000000000001 465.2 L518.6 465.2 Z" fill="#0a0a0a"/>
<path d="M514.4 494.3 L517.4 492.1 L518.6 492.1 L518.6 496.5 L517.4 496.5 Z" fill="#0a0a0a"/>
<path d="M514.4 541.4 L517.4 539.1999999999999 L518.6 539.1999999999999 L518.6 543.6 L517.4 543.6 Z" fill="#0a0a0a"/>
<path d="M514.4 547.3 L517.4 545.0999999999999 L518.6 545.0999999999999 L518.6 549.5 L517.4 549.5 Z" fill="#0a0a0a"/>
<rect x="509.8" y="487.2" width="2.4" height="1.3" fill="#7a1a2a"/>
<path d="M506.8 487.8 H509.8" fill="none" stroke="#999" stroke-width="0.4" />
<path d="M527.7 540 V443.3 H536 M534.8 437 V443.3 M527.7 477.7 H536 M527.7 494.8 H536 M527.7 506.5 H536 M527.7 537.8 H536 M534.3 537.8 V543.8" fill="none" stroke="#46a884" stroke-width="1.0" />
<rect x="525.6" y="540.4" width="4.2" height="5.4" rx="0.8" fill="#fff" stroke="#666" stroke-width="0.5"/>
<path d="M525.6 543.1 H529.8" fill="none" stroke="#666" stroke-width="0.4" />
<path d="M514.8 477.5 H503 M527.7 464.2 H536.9 M260.3 419 V430.9 M359 419.4 V430.9 M377.3 414.2 V425.7 M408.5 404.1 V416.6 M344.4 381.4 H359.3 M339.1 589.8 H354.3" fill="none" stroke="#555" stroke-width="0.5" />
<g transform="translate(324.1 414.2) rotate(31) scale(0.95)"><path d="M-2.6 -3.2 H2.6 L1 0 L2.6 3.2 H-2.6 L-1 0 Z" fill="#0a0a0a"/></g>
<path d="M321.2 420.6 L322.8 417.4" fill="none" stroke="#888" stroke-width="0.5" />
<g transform="translate(323.8 565.6) rotate(-31) scale(0.95)"><path d="M-2.6 -3.2 H2.6 L1 0 L2.6 3.2 H-2.6 L-1 0 Z" fill="#0a0a0a"/></g>
<path d="M321.4 559.4 L322.6 562.4" fill="none" stroke="#e88aa0" stroke-width="0.5" />
<circle cx="351.9" cy="356.4" r="1.4" fill="#fff" stroke="#5c5c5c" stroke-width="0.6"/>
<circle cx="349.5" cy="360.4" r="1.4" fill="#fff" stroke="#5c5c5c" stroke-width="0.6"/>
<circle cx="347.0" cy="364.5" r="1.4" fill="#fff" stroke="#5c5c5c" stroke-width="0.6"/>
<circle cx="344.6" cy="368.5" r="1.4" fill="#fff" stroke="#5c5c5c" stroke-width="0.6"/>
<circle cx="342.2" cy="372.6" r="1.4" fill="#fff" stroke="#5c5c5c" stroke-width="0.6"/>
<circle cx="339.8" cy="376.6" r="1.4" fill="#fff" stroke="#5c5c5c" stroke-width="0.6"/>
<circle cx="337.3" cy="380.7" r="1.4" fill="#fff" stroke="#5c5c5c" stroke-width="0.6"/>
<circle cx="334.9" cy="384.7" r="1.4" fill="#fff" stroke="#5c5c5c" stroke-width="0.6"/>
<circle cx="332.5" cy="388.8" r="1.4" fill="#fff" stroke="#5c5c5c" stroke-width="0.6"/>
<circle cx="330.1" cy="392.8" r="1.4" fill="#fff" stroke="#5c5c5c" stroke-width="0.6"/>
<circle cx="327.6" cy="396.9" r="1.4" fill="#fff" stroke="#5c5c5c" stroke-width="0.6"/>
<circle cx="325.2" cy="400.9" r="1.4" fill="#fff" stroke="#5c5c5c" stroke-width="0.6"/>
<circle cx="323.4" cy="575.2" r="1.4" fill="#fff" stroke="#5c5c5c" stroke-width="0.6"/>
<circle cx="326.5" cy="580.9" r="1.4" fill="#fff" stroke="#5c5c5c" stroke-width="0.6"/>
<circle cx="329.9" cy="585.9" r="1.4" fill="#fff" stroke="#5c5c5c" stroke-width="0.6"/>
<circle cx="333.8" cy="592.3" r="1.4" fill="#fff" stroke="#5c5c5c" stroke-width="0.6"/>
<circle cx="337.4" cy="597.9" r="1.4" fill="#fff" stroke="#5c5c5c" stroke-width="0.6"/>
<circle cx="341.0" cy="603.6" r="1.4" fill="#fff" stroke="#5c5c5c" stroke-width="0.6"/>
<circle cx="344.5" cy="609.2" r="1.4" fill="#fff" stroke="#5c5c5c" stroke-width="0.6"/>
<circle cx="347.4" cy="614.1" r="1.4" fill="#fff" stroke="#5c5c5c" stroke-width="0.6"/>
<rect x="205.2" y="429.4" width="2.3" height="3.2" rx="0.6" fill="#fff" stroke="#5c5c5c" stroke-width="0.62"/>
<rect x="211.6" y="427.0" width="3.4" height="2.3" rx="0.6" fill="#fff" stroke="#5c5c5c" stroke-width="0.62"/>
<rect x="207.3" y="434.4" width="2.3" height="3.2" rx="0.6" fill="#fff" stroke="#5c5c5c" stroke-width="0.62"/>
<rect x="216.4" y="434.4" width="2.3" height="3.2" rx="0.6" fill="#fff" stroke="#5c5c5c" stroke-width="0.62"/>
<rect x="211.6" y="438.4" width="3.4" height="2.3" rx="0.6" fill="#fff" stroke="#5c5c5c" stroke-width="0.62"/>
<rect x="244.3" y="446.2" width="3.4" height="2.3" rx="0.6" fill="#fff" stroke="#5c5c5c" stroke-width="0.62"/>
<rect x="267.2" y="439.2" width="3.4" height="2.3" rx="0.6" fill="#fff" stroke="#5c5c5c" stroke-width="0.62"/>
<rect x="273.9" y="436.0" width="3.4" height="2.3" rx="0.6" fill="#fff" stroke="#5c5c5c" stroke-width="0.62"/>
<rect x="281.6" y="436.0" width="3.4" height="2.3" rx="0.6" fill="#fff" stroke="#5c5c5c" stroke-width="0.62"/>
<rect x="216.9" y="532.4" width="3.4" height="2.3" rx="0.6" fill="#fff" stroke="#5c5c5c" stroke-width="0.62"/>
<rect x="210.9" y="542.0" width="3.4" height="2.3" rx="0.6" fill="#fff" stroke="#5c5c5c" stroke-width="0.62"/>
<rect x="203.3" y="546.3" width="2.3" height="3.2" rx="0.6" fill="#fff" stroke="#5c5c5c" stroke-width="0.62"/>
<rect x="210.9" y="550.4" width="3.4" height="2.3" rx="0.6" fill="#fff" stroke="#5c5c5c" stroke-width="0.62"/>
<rect x="287.5" y="535.3" width="2.3" height="3.2" rx="0.6" fill="#fff" stroke="#5c5c5c" stroke-width="0.62"/>
<rect x="279.3" y="543.2" width="3.4" height="2.3" rx="0.6" fill="#fff" stroke="#5c5c5c" stroke-width="0.62"/>
<rect x="270.9" y="546.4" width="3.4" height="2.3" rx="0.6" fill="#fff" stroke="#5c5c5c" stroke-width="0.62"/>
<circle cx="285.8" cy="549.1" r="1.4" fill="#fff" stroke="#5c5c5c" stroke-width="0.6"/>
<rect x="302.8" y="541.0" width="3.4" height="2.3" rx="0.6" fill="#fff" stroke="#5c5c5c" stroke-width="0.62"/>
<rect x="213.7" y="505.2" width="3.4" height="2.3" rx="0.6" fill="#fff" stroke="#5c5c5c" stroke-width="0.62"/>
<rect x="255.2" y="463.7" width="2.3" height="3.2" rx="0.6" fill="#fff" stroke="#5c5c5c" stroke-width="0.62"/>
<rect x="222.2" y="509.3" width="2.3" height="3.2" rx="0.6" fill="#fff" stroke="#5c5c5c" stroke-width="0.62"/>
<rect x="230.1" y="475.2" width="3.4" height="2.3" rx="0.6" fill="#fff" stroke="#5c5c5c" stroke-width="0.62"/>
<circle cx="228.6" cy="483.1" r="1.4" fill="#fff" stroke="#5c5c5c" stroke-width="0.6"/>
<rect x="243.8" y="468.7" width="3.4" height="2.3" rx="0.6" fill="#fff" stroke="#5c5c5c" stroke-width="0.62"/>
<rect x="254.1" y="468.9" width="3.4" height="2.3" rx="0.6" fill="#fff" stroke="#5c5c5c" stroke-width="0.62"/>
<rect x="260.6" y="465.5" width="3.4" height="2.3" rx="0.6" fill="#fff" stroke="#5c5c5c" stroke-width="0.62"/>
<rect x="245.7" y="477.1" width="3.4" height="2.3" rx="0.6" fill="#fff" stroke="#5c5c5c" stroke-width="0.62"/>
<rect x="251.9" y="477.1" width="3.4" height="2.3" rx="0.6" fill="#fff" stroke="#5c5c5c" stroke-width="0.62"/>
<rect x="235.9" y="487.2" width="3.4" height="2.3" rx="0.6" fill="#fff" stroke="#5c5c5c" stroke-width="0.62"/>
<rect x="235.9" y="502.2" width="3.4" height="2.3" rx="0.6" fill="#fff" stroke="#5c5c5c" stroke-width="0.62"/>
<rect x="244.7" y="487.2" width="3.4" height="2.3" rx="0.6" fill="#fff" stroke="#5c5c5c" stroke-width="0.62"/>
<rect x="244.7" y="502.2" width="3.4" height="2.3" rx="0.6" fill="#fff" stroke="#5c5c5c" stroke-width="0.62"/>
<rect x="252.2" y="487.2" width="3.4" height="2.3" rx="0.6" fill="#fff" stroke="#5c5c5c" stroke-width="0.62"/>
<rect x="252.2" y="502.2" width="3.4" height="2.3" rx="0.6" fill="#fff" stroke="#5c5c5c" stroke-width="0.62"/>
<rect x="258.8" y="487.2" width="3.4" height="2.3" rx="0.6" fill="#fff" stroke="#5c5c5c" stroke-width="0.62"/>
<rect x="258.8" y="502.2" width="3.4" height="2.3" rx="0.6" fill="#fff" stroke="#5c5c5c" stroke-width="0.62"/>
<rect x="240.6" y="490.8" width="3.4" height="2.3" rx="0.6" fill="#fff" stroke="#5c5c5c" stroke-width="0.62"/>
<rect x="264.9" y="490.6" width="3.4" height="2.3" rx="0.6" fill="#fff" stroke="#5c5c5c" stroke-width="0.62"/>
<rect x="264.9" y="499.1" width="3.4" height="2.3" rx="0.6" fill="#fff" stroke="#5c5c5c" stroke-width="0.62"/>
<rect x="272.8" y="478.4" width="2.3" height="3.2" rx="0.6" fill="#fff" stroke="#5c5c5c" stroke-width="0.62"/>
<rect x="272.8" y="483.2" width="2.3" height="3.2" rx="0.6" fill="#fff" stroke="#5c5c5c" stroke-width="0.62"/>
<rect x="279.0" y="491.2" width="2.3" height="3.2" rx="0.6" fill="#fff" stroke="#5c5c5c" stroke-width="0.62"/>
<rect x="279.0" y="500.3" width="2.3" height="3.2" rx="0.6" fill="#fff" stroke="#5c5c5c" stroke-width="0.62"/>
<rect x="279.0" y="506.2" width="2.3" height="3.2" rx="0.6" fill="#fff" stroke="#5c5c5c" stroke-width="0.62"/>
<rect x="271.5" y="510.5" width="2.3" height="3.2" rx="0.6" fill="#fff" stroke="#5c5c5c" stroke-width="0.62"/>
<rect x="271.5" y="515.3" width="2.3" height="3.2" rx="0.6" fill="#fff" stroke="#5c5c5c" stroke-width="0.62"/>
<circle cx="228.9" cy="503.8" r="1.4" fill="#fff" stroke="#5c5c5c" stroke-width="0.6"/>
<circle cx="228.9" cy="507.3" r="1.4" fill="#fff" stroke="#5c5c5c" stroke-width="0.6"/>
<circle cx="228.9" cy="510.6" r="1.4" fill="#fff" stroke="#5c5c5c" stroke-width="0.6"/>
<circle cx="228.9" cy="513.8" r="1.4" fill="#fff" stroke="#5c5c5c" stroke-width="0.6"/>
<circle cx="228.9" cy="516.9" r="1.4" fill="#fff" stroke="#5c5c5c" stroke-width="0.6"/>
<circle cx="364" cy="431.1" r="1.4" fill="#fff" stroke="#5c5c5c" stroke-width="0.6"/>
<rect x="340.2" y="430.2" width="3.4" height="2.3" rx="0.6" fill="#fff" stroke="#5c5c5c" stroke-width="0.62"/>
<rect x="340.2" y="434.1" width="3.4" height="2.3" rx="0.6" fill="#fff" stroke="#5c5c5c" stroke-width="0.62"/>
<rect x="353.2" y="438.9" width="2.3" height="3.2" rx="0.6" fill="#fff" stroke="#5c5c5c" stroke-width="0.62"/>
<rect x="353.2" y="446.4" width="2.3" height="3.2" rx="0.6" fill="#fff" stroke="#5c5c5c" stroke-width="0.62"/>
<rect x="325.6" y="442.0" width="2.3" height="3.2" rx="0.6" fill="#fff" stroke="#5c5c5c" stroke-width="0.62"/>
<rect x="325.6" y="445.2" width="2.3" height="3.2" rx="0.6" fill="#fff" stroke="#5c5c5c" stroke-width="0.62"/>
<circle cx="326.7" cy="450.3" r="1.4" fill="#fff" stroke="#5c5c5c" stroke-width="0.6"/>
<rect x="315.5" y="451.4" width="2.3" height="3.2" rx="0.6" fill="#fff" stroke="#5c5c5c" stroke-width="0.62"/>
<rect x="315.5" y="457.5" width="2.3" height="3.2" rx="0.6" fill="#fff" stroke="#5c5c5c" stroke-width="0.62"/>
<rect x="315.5" y="471.1" width="2.3" height="3.2" rx="0.6" fill="#fff" stroke="#5c5c5c" stroke-width="0.62"/>
<rect x="315.5" y="477.2" width="2.3" height="3.2" rx="0.6" fill="#fff" stroke="#5c5c5c" stroke-width="0.62"/>
<rect x="315.5" y="484.2" width="2.3" height="3.2" rx="0.6" fill="#fff" stroke="#5c5c5c" stroke-width="0.62"/>
<rect x="315.5" y="490.7" width="2.3" height="3.2" rx="0.6" fill="#fff" stroke="#5c5c5c" stroke-width="0.62"/>
<rect x="330.2" y="457.5" width="2.3" height="3.2" rx="0.6" fill="#fff" stroke="#5c5c5c" stroke-width="0.62"/>
<rect x="373.2" y="464.3" width="2.3" height="3.2" rx="0.6" fill="#fff" stroke="#5c5c5c" stroke-width="0.62"/>
<rect x="342.1" y="461.2" width="3.4" height="2.3" rx="0.6" fill="#fff" stroke="#5c5c5c" stroke-width="0.62"/>
<rect x="354.8" y="461.2" width="3.4" height="2.3" rx="0.6" fill="#fff" stroke="#5c5c5c" stroke-width="0.62"/>
<rect x="362.9" y="461.2" width="3.4" height="2.3" rx="0.6" fill="#fff" stroke="#5c5c5c" stroke-width="0.62"/>
<rect x="331.6" y="467.8" width="3.4" height="2.3" rx="0.6" fill="#fff" stroke="#5c5c5c" stroke-width="0.62"/>
<rect x="352.1" y="467.8" width="3.4" height="2.3" rx="0.6" fill="#fff" stroke="#5c5c5c" stroke-width="0.62"/>
<rect x="359.3" y="467.8" width="3.4" height="2.3" rx="0.6" fill="#fff" stroke="#5c5c5c" stroke-width="0.62"/>
<rect x="366.2" y="467.8" width="3.4" height="2.3" rx="0.6" fill="#fff" stroke="#5c5c5c" stroke-width="0.62"/>
<rect x="339.2" y="466.7" width="3.4" height="2.3" rx="0.6" fill="#fff" stroke="#5c5c5c" stroke-width="0.62"/>
<rect x="345.0" y="466.7" width="3.4" height="2.3" rx="0.6" fill="#fff" stroke="#5c5c5c" stroke-width="0.62"/>
<rect x="339.2" y="469.2" width="3.4" height="2.3" rx="0.6" fill="#fff" stroke="#5c5c5c" stroke-width="0.62"/>
<rect x="345.0" y="469.2" width="3.4" height="2.3" rx="0.6" fill="#fff" stroke="#5c5c5c" stroke-width="0.62"/>
<rect x="339.2" y="471.6" width="3.4" height="2.3" rx="0.6" fill="#fff" stroke="#5c5c5c" stroke-width="0.62"/>
<rect x="345.0" y="471.6" width="3.4" height="2.3" rx="0.6" fill="#fff" stroke="#5c5c5c" stroke-width="0.62"/>
<rect x="339.2" y="476.2" width="3.4" height="2.3" rx="0.6" fill="#fff" stroke="#5c5c5c" stroke-width="0.62"/>
<rect x="345.0" y="476.2" width="3.4" height="2.3" rx="0.6" fill="#fff" stroke="#5c5c5c" stroke-width="0.62"/>
<rect x="339.2" y="478.6" width="3.4" height="2.3" rx="0.6" fill="#fff" stroke="#5c5c5c" stroke-width="0.62"/>
<rect x="345.0" y="478.6" width="3.4" height="2.3" rx="0.6" fill="#fff" stroke="#5c5c5c" stroke-width="0.62"/>
<rect x="339.2" y="480.9" width="3.4" height="2.3" rx="0.6" fill="#fff" stroke="#5c5c5c" stroke-width="0.62"/>
<rect x="345.0" y="480.9" width="3.4" height="2.3" rx="0.6" fill="#fff" stroke="#5c5c5c" stroke-width="0.62"/>
<rect x="339.2" y="486.6" width="3.4" height="2.3" rx="0.6" fill="#fff" stroke="#5c5c5c" stroke-width="0.62"/>
<rect x="345.0" y="486.6" width="3.4" height="2.3" rx="0.6" fill="#fff" stroke="#5c5c5c" stroke-width="0.62"/>
<rect x="339.2" y="489.4" width="3.4" height="2.3" rx="0.6" fill="#fff" stroke="#5c5c5c" stroke-width="0.62"/>
<rect x="345.0" y="489.4" width="3.4" height="2.3" rx="0.6" fill="#fff" stroke="#5c5c5c" stroke-width="0.62"/>
<rect x="339.2" y="491.7" width="3.4" height="2.3" rx="0.6" fill="#fff" stroke="#5c5c5c" stroke-width="0.62"/>
<rect x="345.0" y="491.7" width="3.4" height="2.3" rx="0.6" fill="#fff" stroke="#5c5c5c" stroke-width="0.62"/>
<rect x="342.1" y="494.1" width="3.4" height="2.3" rx="0.6" fill="#fff" stroke="#5c5c5c" stroke-width="0.62"/>
<rect x="378.0" y="479.2" width="3.4" height="2.3" rx="0.6" fill="#fff" stroke="#5c5c5c" stroke-width="0.62"/>
<rect x="367.2" y="489.2" width="2.3" height="3.2" rx="0.6" fill="#fff" stroke="#5c5c5c" stroke-width="0.62"/>
<rect x="385.1" y="489.2" width="2.3" height="3.2" rx="0.6" fill="#fff" stroke="#5c5c5c" stroke-width="0.62"/>
<circle cx="362.8" cy="503.7" r="1.4" fill="#fff" stroke="#5c5c5c" stroke-width="0.6"/>
<rect x="327.1" y="505.8" width="3.4" height="2.3" rx="0.6" fill="#fff" stroke="#5c5c5c" stroke-width="0.62"/>
<rect x="334.3" y="505.8" width="3.4" height="2.3" rx="0.6" fill="#fff" stroke="#5c5c5c" stroke-width="0.62"/>
<rect x="347.1" y="505.8" width="3.4" height="2.3" rx="0.6" fill="#fff" stroke="#5c5c5c" stroke-width="0.62"/>
<rect x="355.2" y="505.8" width="3.4" height="2.3" rx="0.6" fill="#fff" stroke="#5c5c5c" stroke-width="0.62"/>
<rect x="355.2" y="499.1" width="3.4" height="2.3" rx="0.6" fill="#fff" stroke="#5c5c5c" stroke-width="0.62"/>
<circle cx="315.2" cy="506" r="1.4" fill="#fff" stroke="#5c5c5c" stroke-width="0.6"/>
<circle cx="310.8" cy="511.1" r="1.4" fill="#fff" stroke="#5c5c5c" stroke-width="0.6"/>
<circle cx="315.2" cy="517.5" r="1.4" fill="#fff" stroke="#5c5c5c" stroke-width="0.6"/>
<rect x="316.8" y="520.1" width="3.4" height="2.3" rx="0.6" fill="#fff" stroke="#5c5c5c" stroke-width="0.62"/>
<circle cx="316.8" cy="526.2" r="1.4" fill="#fff" stroke="#5c5c5c" stroke-width="0.6"/>
<circle cx="318" cy="536.3" r="1.4" fill="#fff" stroke="#5c5c5c" stroke-width="0.6"/>
<rect x="333.2" y="518.2" width="3.4" height="2.3" rx="0.6" fill="#fff" stroke="#5c5c5c" stroke-width="0.62"/>
<rect x="333.2" y="522.1" width="3.4" height="2.3" rx="0.6" fill="#fff" stroke="#5c5c5c" stroke-width="0.62"/>
<rect x="339.3" y="516.9" width="3.4" height="2.3" rx="0.6" fill="#fff" stroke="#5c5c5c" stroke-width="0.62"/>
<rect x="343.7" y="516.9" width="3.4" height="2.3" rx="0.6" fill="#fff" stroke="#5c5c5c" stroke-width="0.62"/>
<rect x="339.3" y="523.1" width="3.4" height="2.3" rx="0.6" fill="#fff" stroke="#5c5c5c" stroke-width="0.62"/>
<rect x="349.1" y="519.4" width="2.3" height="3.2" rx="0.6" fill="#fff" stroke="#5c5c5c" stroke-width="0.62"/>
<rect x="349.1" y="522.9" width="2.3" height="3.2" rx="0.6" fill="#fff" stroke="#5c5c5c" stroke-width="0.62"/>
<rect x="343.5" y="527.1" width="3.4" height="2.3" rx="0.6" fill="#fff" stroke="#5c5c5c" stroke-width="0.62"/>
<rect x="326.1" y="528.3" width="2.3" height="3.2" rx="0.6" fill="#fff" stroke="#5c5c5c" stroke-width="0.62"/>
<circle cx="352.7" cy="534.4" r="1.4" fill="#fff" stroke="#5c5c5c" stroke-width="0.6"/>
<circle cx="330.9" cy="537.9" r="1.4" fill="#fff" stroke="#5c5c5c" stroke-width="0.6"/>
<rect x="346.1" y="536.8" width="3.4" height="2.3" rx="0.6" fill="#fff" stroke="#5c5c5c" stroke-width="0.62"/>
<rect x="302.9" y="541.1" width="3.4" height="2.3" rx="0.6" fill="#fff" stroke="#5c5c5c" stroke-width="0.62"/>
<circle cx="316" cy="551.8" r="1.4" fill="#fff" stroke="#5c5c5c" stroke-width="0.6"/>
<rect x="317.3" y="550.6" width="3.4" height="2.3" rx="0.6" fill="#fff" stroke="#5c5c5c" stroke-width="0.62"/>
<rect x="314.5" y="555.8" width="2.3" height="3.2" rx="0.6" fill="#fff" stroke="#5c5c5c" stroke-width="0.62"/>
<rect x="317.1" y="555.8" width="2.3" height="3.2" rx="0.6" fill="#fff" stroke="#5c5c5c" stroke-width="0.62"/>
<rect x="319.7" y="555.8" width="2.3" height="3.2" rx="0.6" fill="#fff" stroke="#5c5c5c" stroke-width="0.62"/>
<rect x="322.1" y="555.8" width="2.3" height="3.2" rx="0.6" fill="#fff" stroke="#5c5c5c" stroke-width="0.62"/>
<rect x="351.7" y="548.2" width="3.4" height="2.3" rx="0.6" fill="#fff" stroke="#5c5c5c" stroke-width="0.62"/>
<circle cx="421" cy="416.3" r="1.4" fill="#fff" stroke="#5c5c5c" stroke-width="0.6"/>
<rect x="391.6" y="418.9" width="3.2" height="3" rx="0.5" fill="#b9a" stroke="#544" stroke-width="0.5"/>
<circle cx="422.4" cy="566" r="1.4" fill="#fff" stroke="#5c5c5c" stroke-width="0.6"/>
<rect x="391.5" y="559.1" width="3.2" height="3" rx="0.5" fill="#b9a" stroke="#544" stroke-width="0.5"/>
<rect x="445.2" y="428.6" width="2.3" height="3.2" rx="0.6" fill="#fff" stroke="#5c5c5c" stroke-width="0.62"/>
<rect x="458.1" y="434.4" width="3.4" height="2.3" rx="0.6" fill="#fff" stroke="#5c5c5c" stroke-width="0.62"/>
<rect x="471.2" y="434.4" width="3.4" height="2.3" rx="0.6" fill="#fff" stroke="#5c5c5c" stroke-width="0.62"/>
<rect x="478.7" y="434.4" width="3.4" height="2.3" rx="0.6" fill="#fff" stroke="#5c5c5c" stroke-width="0.62"/>
<circle cx="499.3" cy="442.5" r="1.4" fill="#fff" stroke="#5c5c5c" stroke-width="0.6"/>
<circle cx="413.3" cy="450.4" r="1.4" fill="#fff" stroke="#5c5c5c" stroke-width="0.6"/>
<rect x="465.8" y="435.2" width="3.4" height="2.3" rx="0.6" fill="#fff" stroke="#5c5c5c" stroke-width="0.62"/>
<rect x="465.8" y="457.0" width="3.4" height="2.3" rx="0.6" fill="#fff" stroke="#5c5c5c" stroke-width="0.62"/>
<rect x="466.0" y="541.5" width="3.4" height="2.3" rx="0.6" fill="#fff" stroke="#5c5c5c" stroke-width="0.62"/>
<rect x="424.1" y="465.9" width="3.4" height="2.3" rx="0.6" fill="#fff" stroke="#5c5c5c" stroke-width="0.62"/>
<rect x="399.2" y="467.8" width="2.3" height="3.2" rx="0.6" fill="#fff" stroke="#5c5c5c" stroke-width="0.62"/>
<rect x="396.8" y="481.4" width="3.4" height="2.3" rx="0.6" fill="#fff" stroke="#5c5c5c" stroke-width="0.62"/>
<rect x="400.2" y="487.3" width="2.3" height="3.2" rx="0.6" fill="#fff" stroke="#5c5c5c" stroke-width="0.62"/>
<rect x="396.8" y="493.1" width="3.4" height="2.3" rx="0.6" fill="#fff" stroke="#5c5c5c" stroke-width="0.62"/>
<rect x="411.3" y="486.5" width="3.4" height="2.3" rx="0.6" fill="#fff" stroke="#5c5c5c" stroke-width="0.62"/>
<rect x="473.3" y="466.2" width="3.4" height="2.3" rx="0.6" fill="#fff" stroke="#5c5c5c" stroke-width="0.62"/>
<rect x="487.6" y="487.9" width="3.4" height="2.3" rx="0.6" fill="#fff" stroke="#5c5c5c" stroke-width="0.62"/>
<rect x="424.1" y="523.6" width="3.4" height="2.3" rx="0.6" fill="#fff" stroke="#5c5c5c" stroke-width="0.62"/>
<rect x="473.1" y="523.1" width="3.4" height="2.3" rx="0.6" fill="#fff" stroke="#5c5c5c" stroke-width="0.62"/>
<rect x="446.1" y="548.2" width="2.3" height="3.2" rx="0.6" fill="#fff" stroke="#5c5c5c" stroke-width="0.62"/>
<rect x="458.1" y="547.8" width="3.4" height="2.3" rx="0.6" fill="#fff" stroke="#5c5c5c" stroke-width="0.62"/>
<rect x="493.0" y="535.8" width="3.4" height="2.3" rx="0.6" fill="#fff" stroke="#5c5c5c" stroke-width="0.62"/>
<circle cx="490.2" cy="542.2" r="1.4" fill="#fff" stroke="#5c5c5c" stroke-width="0.6"/>
<circle cx="490.2" cy="550.8" r="1.4" fill="#fff" stroke="#5c5c5c" stroke-width="0.6"/>
<rect x="506.1" y="527.1" width="3.4" height="2.3" rx="0.6" fill="#fff" stroke="#5c5c5c" stroke-width="0.62"/>
<circle cx="519" cy="555.2" r="1.4" fill="#fff" stroke="#5c5c5c" stroke-width="0.6"/>
<circle cx="517.9" cy="426" r="1.4" fill="#fff" stroke="#5c5c5c" stroke-width="0.6"/>
<circle cx="513.4" cy="430.2" r="1.4" fill="#fff" stroke="#5c5c5c" stroke-width="0.6"/>
<rect x="523.2" y="440.8" width="2.3" height="3.2" rx="0.6" fill="#fff" stroke="#5c5c5c" stroke-width="0.62"/>
<rect x="500.6" y="461.4" width="2.3" height="3.2" rx="0.6" fill="#fff" stroke="#5c5c5c" stroke-width="0.62"/>
<rect x="522.4" y="461.4" width="2.3" height="3.2" rx="0.6" fill="#fff" stroke="#5c5c5c" stroke-width="0.62"/>
<rect x="505.9" y="470.2" width="3.4" height="2.3" rx="0.6" fill="#fff" stroke="#5c5c5c" stroke-width="0.62"/>
<rect x="518.5" y="488.0" width="3.4" height="2.3" rx="0.6" fill="#fff" stroke="#5c5c5c" stroke-width="0.62"/>
<circle cx="524" cy="494.3" r="1.4" fill="#fff" stroke="#5c5c5c" stroke-width="0.6"/>
<circle cx="524" cy="504.4" r="1.4" fill="#fff" stroke="#5c5c5c" stroke-width="0.6"/>
<rect x="518.5" y="510.0" width="3.4" height="2.3" rx="0.6" fill="#fff" stroke="#5c5c5c" stroke-width="0.62"/>
<circle cx="521.3" cy="520.5" r="1.4" fill="#fff" stroke="#5c5c5c" stroke-width="0.6"/>
<circle cx="521.3" cy="530.3" r="1.4" fill="#fff" stroke="#5c5c5c" stroke-width="0.6"/>
<circle cx="521.3" cy="541.4" r="1.4" fill="#fff" stroke="#5c5c5c" stroke-width="0.6"/>
<rect x="536.2" y="441.8" width="2.3" height="3.2" rx="0.6" fill="#fff" stroke="#5c5c5c" stroke-width="0.62"/>
<rect x="533.1" y="435.5" width="3.4" height="2.3" rx="0.6" fill="#fff" stroke="#5c5c5c" stroke-width="0.62"/>
<rect x="536.2" y="476.2" width="2.3" height="3.2" rx="0.6" fill="#fff" stroke="#5c5c5c" stroke-width="0.62"/>
<rect x="536.2" y="493.2" width="2.3" height="3.2" rx="0.6" fill="#fff" stroke="#5c5c5c" stroke-width="0.62"/>
<rect x="536.2" y="504.9" width="2.3" height="3.2" rx="0.6" fill="#fff" stroke="#5c5c5c" stroke-width="0.62"/>
<rect x="536.2" y="536.4" width="2.3" height="3.2" rx="0.6" fill="#fff" stroke="#5c5c5c" stroke-width="0.62"/>
<rect x="533.1" y="543.4" width="3.4" height="2.3" rx="0.6" fill="#fff" stroke="#5c5c5c" stroke-width="0.62"/>
<circle cx="320.5" cy="421.8" r="1.4" fill="#fff" stroke="#5c5c5c" stroke-width="0.6"/>
<circle cx="260.3" cy="415" r="3.9" fill="#fff" stroke="#666" stroke-width="0.55"/>
<text x="260.3" y="417.15" font-size="6.2" text-anchor="middle" fill="#333" font-family="Liberation Sans" >1</text>
<circle cx="282.3" cy="472.1" r="3.9" fill="#fff" stroke="#666" stroke-width="0.55"/>
<text x="282.3" y="474.25" font-size="6.2" text-anchor="middle" fill="#333" font-family="Liberation Sans" >2</text>
<circle cx="268.9" cy="529" r="3.9" fill="#fff" stroke="#666" stroke-width="0.55"/>
<text x="268.9" y="531.15" font-size="6.2" text-anchor="middle" fill="#333" font-family="Liberation Sans" >3</text>
<circle cx="337.5" cy="453" r="3.9" fill="#fff" stroke="#666" stroke-width="0.55"/>
<text x="337.5" y="455.15" font-size="6.2" text-anchor="middle" fill="#333" font-family="Liberation Sans" >4</text>
<circle cx="363.2" cy="381.4" r="3.9" fill="#fff" stroke="#666" stroke-width="0.55"/>
<text x="363.2" y="383.54999999999995" font-size="6.2" text-anchor="middle" fill="#333" font-family="Liberation Sans" >5</text>
<circle cx="359" cy="415.4" r="3.9" fill="#fff" stroke="#666" stroke-width="0.55"/>
<text x="359" y="417.54999999999995" font-size="6.2" text-anchor="middle" fill="#333" font-family="Liberation Sans" >6</text>
<circle cx="377.3" cy="410.2" r="3.9" fill="#fff" stroke="#666" stroke-width="0.55"/>
<text x="377.3" y="412.34999999999997" font-size="6.2" text-anchor="middle" fill="#333" font-family="Liberation Sans" >7</text>
<circle cx="408.5" cy="400.2" r="3.9" fill="#fff" stroke="#666" stroke-width="0.55"/>
<text x="408.5" y="402.34999999999997" font-size="6.2" text-anchor="middle" fill="#333" font-family="Liberation Sans" >8</text>
<circle cx="468.8" cy="485.8" r="3.9" fill="#fff" stroke="#666" stroke-width="0.55"/>
<text x="468.8" y="487.95" font-size="6.2" text-anchor="middle" fill="#333" font-family="Liberation Sans" >9</text>
<circle cx="513.7" cy="414.1" r="3.9" fill="#fff" stroke="#666" stroke-width="0.55"/>
<text x="513.7" y="416.25" font-size="5.9" text-anchor="middle" fill="#333" font-family="Liberation Sans" letter-spacing="-0.5">10</text>
<circle cx="499.1" cy="477.5" r="3.9" fill="#fff" stroke="#666" stroke-width="0.55"/>
<text x="499.1" y="479.65" font-size="5.9" text-anchor="middle" fill="#333" font-family="Liberation Sans" letter-spacing="-0.5">11</text>
<circle cx="540.8" cy="464.2" r="3.9" fill="#fff" stroke="#666" stroke-width="0.55"/>
<text x="540.8" y="466.34999999999997" font-size="5.9" text-anchor="middle" fill="#333" font-family="Liberation Sans" letter-spacing="-0.5">12</text>
<circle cx="482" cy="571.4" r="3.9" fill="#fff" stroke="#666" stroke-width="0.55"/>
<text x="482" y="573.55" font-size="5.9" text-anchor="middle" fill="#333" font-family="Liberation Sans" letter-spacing="-0.5">13</text>
<circle cx="358.2" cy="589.8" r="3.9" fill="#fff" stroke="#666" stroke-width="0.55"/>
<text x="358.2" y="591.9499999999999" font-size="5.9" text-anchor="middle" fill="#333" font-family="Liberation Sans" letter-spacing="-0.5">14</text>
<circle cx="364.2" cy="527.6" r="3.9" fill="#fff" stroke="#666" stroke-width="0.55"/>
<text x="364.2" y="529.75" font-size="5.9" text-anchor="middle" fill="#333" font-family="Liberation Sans" letter-spacing="-0.5">15</text>
<circle cx="436.4" cy="520.7" r="3.9" fill="#fff" stroke="#666" stroke-width="0.55"/>
<text x="436.4" y="522.85" font-size="5.9" text-anchor="middle" fill="#333" font-family="Liberation Sans" letter-spacing="-0.5">16</text>
<circle cx="253.9" cy="453.8" r="3.9" fill="#fff" stroke="#666" stroke-width="0.55"/>
<text x="253.9" y="455.95" font-size="5.9" text-anchor="middle" fill="#333" font-family="Liberation Sans" letter-spacing="-0.5">17</text>
<circle cx="242" cy="566.3" r="3.9" fill="#fff" stroke="#666" stroke-width="0.55"/>
<text x="242" y="568.4499999999999" font-size="5.9" text-anchor="middle" fill="#333" font-family="Liberation Sans" letter-spacing="-0.5">18</text>
</svg>
<div class="t" style="left:184.8px;top:640.8px;font-size:7.3px;line-height:9px;-webkit-text-stroke:0.12px #000;">1</div>
<div class="t" style="left:199.5px;top:640.8px;font-size:7.3px;line-height:9px;-webkit-text-stroke:0.12px #000;">engine bay harness</div>
<div class="t" style="left:184.8px;top:653.1px;font-size:7.3px;line-height:9px;-webkit-text-stroke:0.12px #000;">2</div>
<div class="t" style="left:199.5px;top:653.1px;font-size:7.3px;line-height:9px;-webkit-text-stroke:0.12px #000;">engine harness</div>
<div class="t" style="left:184.8px;top:665.5px;font-size:7.3px;line-height:9px;-webkit-text-stroke:0.12px #000;">3</div>
<div class="t" style="left:199.5px;top:665.5px;font-size:7.3px;line-height:9px;-webkit-text-stroke:0.12px #000;">battery positive harness</div>
<div class="t" style="left:184.8px;top:677.8px;font-size:7.3px;line-height:9px;-webkit-text-stroke:0.12px #000;">4</div>
<div class="t" style="left:199.5px;top:677.8px;font-size:7.3px;line-height:9px;-webkit-text-stroke:0.12px #000;">IP harness</div>
<div class="t" style="left:184.8px;top:690.1px;font-size:7.3px;line-height:9px;-webkit-text-stroke:0.12px #000;">5</div>
<div class="t" style="left:199.5px;top:690.1px;font-size:7.3px;line-height:9px;-webkit-text-stroke:0.12px #000;">driver door harness</div>
<div class="t" style="left:184.8px;top:702.4px;font-size:7.3px;line-height:9px;-webkit-text-stroke:0.12px #000;">6</div>
<div class="t" style="left:199.5px;top:702.4px;font-size:7.3px;line-height:9px;-webkit-text-stroke:0.12px #000;">AT harness</div>
<div class="t" style="left:184.8px;top:714.8px;font-size:7.3px;line-height:9px;-webkit-text-stroke:0.12px #000;">7</div>
<div class="t" style="left:199.5px;top:714.8px;font-size:7.3px;line-height:9px;-webkit-text-stroke:0.12px #000;">right floor harness</div>
<div class="t" style="left:184.8px;top:727.1px;font-size:7.3px;line-height:9px;-webkit-text-stroke:0.12px #000;">8</div>
<div class="t" style="left:199.5px;top:727.1px;font-size:7.3px;line-height:9px;-webkit-text-stroke:0.12px #000;">slide door contact harness</div>
<div class="t" style="left:184.8px;top:739.4px;font-size:7.3px;line-height:9px;-webkit-text-stroke:0.12px #000;">9</div>
<div class="t" style="left:199.5px;top:739.4px;font-size:7.3px;line-height:9px;-webkit-text-stroke:0.12px #000;">fuel tank harness</div>
<div class="t" style="left:379.8px;top:639.7px;font-size:7.3px;line-height:9px;-webkit-text-stroke:0.12px #000;">10</div>
<div class="t" style="left:394.4px;top:639.7px;font-size:7.3px;line-height:9px;-webkit-text-stroke:0.12px #000;">tail door link harness</div>
<div class="t" style="left:379.8px;top:652.0px;font-size:7.3px;line-height:9px;-webkit-text-stroke:0.12px #000;">11</div>
<div class="t" style="left:394.4px;top:652.0px;font-size:7.3px;line-height:9px;-webkit-text-stroke:0.12px #000;">tail door haress</div>
<div class="t" style="left:379.8px;top:664.4px;font-size:7.3px;line-height:9px;-webkit-text-stroke:0.12px #000;">12</div>
<div class="t" style="left:394.4px;top:664.4px;font-size:7.3px;line-height:9px;-webkit-text-stroke:0.12px #000;">parking radar harness</div>
<div class="t" style="left:379.8px;top:676.7px;font-size:7.3px;line-height:9px;-webkit-text-stroke:0.12px #000;">13</div>
<div class="t" style="left:394.4px;top:676.7px;font-size:7.3px;line-height:9px;-webkit-text-stroke:0.12px #000;">left floor harness</div>
<div class="t" style="left:379.8px;top:689.0px;font-size:7.3px;line-height:9px;-webkit-text-stroke:0.12px #000;">14</div>
<div class="t" style="left:394.4px;top:689.0px;font-size:7.3px;line-height:9px;-webkit-text-stroke:0.12px #000;">passenger door harness</div>
<div class="t" style="left:379.8px;top:701.4px;font-size:7.3px;line-height:9px;-webkit-text-stroke:0.12px #000;">15</div>
<div class="t" style="left:394.4px;top:701.4px;font-size:7.3px;line-height:9px;-webkit-text-stroke:0.12px #000;">front roof harness</div>
<div class="t" style="left:379.8px;top:713.7px;font-size:7.3px;line-height:9px;-webkit-text-stroke:0.12px #000;">16</div>
<div class="t" style="left:394.4px;top:713.7px;font-size:7.3px;line-height:9px;-webkit-text-stroke:0.12px #000;">rear roof harness</div>
<div class="t" style="left:379.8px;top:726.0px;font-size:7.3px;line-height:9px;-webkit-text-stroke:0.12px #000;">17</div>
<div class="t" style="left:394.4px;top:726.0px;font-size:7.3px;line-height:9px;-webkit-text-stroke:0.12px #000;">engine ground harness</div>
<div class="t" style="left:379.8px;top:738.3px;font-size:7.3px;line-height:9px;-webkit-text-stroke:0.12px #000;">18</div>
<div class="t" style="left:394.4px;top:738.3px;font-size:7.3px;line-height:9px;-webkit-text-stroke:0.12px #000;">battery negative harness</div>
<!-- page 2 -->
<div class="t" style="left:597.6px;top:269.4px;font-family:'Liberation Mono',monospace;font-weight:bold;font-size:10.3px;line-height:12px;transform:scaleX(0.828);transform-origin:0 0;">Electrical system</div>
<div class="abs" style="left:597.6px;top:284.9px;width:370.9px;height:1.6px;background:#1a1a1a;"></div>
<div class="t" style="left:597.8px;top:296.6px;font-size:7.3px;line-height:9px;letter-spacing:-0.245px;-webkit-text-stroke:0.12px #000;">The following illustration represents all earth points.</div>
<div class="abs" style="left:597.3px;top:315.4px;width:371.2px;height:237.2px;box-sizing:border-box;border:0.9px solid #8e8e8e;"></div>
<svg class="abs" style="left:598px;top:316px" width="370" height="236" viewBox="598 316 370 236">
<g fill="none" stroke="#c6c6c6" stroke-width="0.7">
<path d="M687 374.7 H903 Q913.3 375.5 913.3 386 Q914.6 429 913.3 472 Q913.3 482.8 903 483.6 H687 Q672 483.6 663.5 475 Q657 466 656.9 452 V406 Q657 392 663.5 383.5 Q672 374.7 687 374.7 Z"/>
<path d="M690 377 H900 Q910.6 377.5 910.8 388 Q912 429 910.8 470 Q910.6 481 900 481.4 H690" stroke="#dedede"/>
<path d="M663 384 Q659.5 395 659.6 406 V452 Q659.6 464 664 474" stroke="#dadada"/>
<path d="M698 381 Q688 429 698 477.5"/>
<path d="M703.5 380.5 Q693.5 429 703.5 478" stroke="#dadada"/>
<path d="M698 381 Q712 377.5 732.5 378 M698 477.5 Q712 479.5 732.5 472"/>
<path d="M732.5 387 V472"/>
<path d="M711 381 Q709.5 429 711.5 476" stroke="#e2e2e2"/>
<path d="M732.5 387.1 H905 Q907.5 387.5 907.5 390 M732.5 471.8 H905 Q907.5 471.4 907.5 469" stroke="#d6d6d6"/>
<path d="M663 401.5 L680 398.5 Q688 397.5 690 400 M663 452 Q678 456.5 690 457" stroke="#dcdcdc"/>
<path d="M718 375 Q720 366 724.5 364.2 Q727.5 364.6 726 369 Q723.5 373.5 720 376"/>
<path d="M718.5 483 Q720 492 724.5 494 Q727.5 493.6 726 489 Q723.5 485 720.5 482.5"/>
<path d="M770 375 V387 M773 375 V387 M770 472 V483.5 M773 472 V483.5 M838.5 375 V383.5 M868.5 376.5 V383 M838 475 V483.5 M868 476 V483"/>
<path d="M690 383.6 H905 M690 474.8 H905" stroke="#e0e0e0"/>
<path d="M777 377.2 H836 V381.6 H777 Z M842 377.2 H866 M842 381.4 H866 M777 477 H836 V481.2 H777 Z M842 477.8 H866 V481.4 H842 Z" stroke="#dcdcdc"/>
<path d="M736 378.6 H766 Q768 380 766 381.6 H736 M736 477.6 H766 Q768 479 766 480.6 H736" stroke="#e0e0e0"/>
<path d="M888 375.5 L895 379.5 L888 380" stroke="#dedede"/>
</g>
<g stroke="#444" stroke-width="0.6" fill="none">
<path d="M657.2 365.3 L675.4 385.7"/>
<path d="M672.8 356.6 L685 391.7"/>
<path d="M694.5 356.6 L704.5 406.4"/>
<path d="M715.7 356.6 L711 392.4"/>
<path d="M739.6 356.6 L722.1 383.2"/>
<path d="M765.6 357.5 L729.7 388.2"/>
<path d="M890.5 357.5 L879.7 386.6"/>
<path d="M647.2 389.1 L683.3 406.4"/>
<path d="M647.2 410.8 L704.5 426.1"/>
<path d="M647.2 437.7 L715.8 437.7"/>
<path d="M647.2 450.3 L704.5 450.2"/>
<path d="M647.2 463.7 L667.1 459.5"/>
<path d="M658 483.2 L679.8 473.4"/>
<path d="M674.5 493.6 L688.2 472.9"/>
<path d="M704.9 501.4 L718.3 476"/>
<path d="M732.6 501.4 L739 476"/>
<path d="M780.3 501.4 L716 450.2"/>
<path d="M904.4 501.4 L889.5 475.2"/>
<path d="M924.8 426.1 L901.8 426.1"/>
</g><g fill="#0a0a0a">
<circle cx="675.4" cy="385.7" r="2.3"/>
<circle cx="685" cy="391.7" r="2.3"/>
<circle cx="683.3" cy="406.4" r="2.3"/>
<circle cx="704.5" cy="406.4" r="2.3"/>
<circle cx="711" cy="392.4" r="2.3"/>
<circle cx="722.1" cy="383.2" r="2.3"/>
<circle cx="729.7" cy="388.2" r="2.3"/>
<circle cx="704.5" cy="426.1" r="2.3"/>
<circle cx="715.8" cy="437.7" r="2.3"/>
<circle cx="704.5" cy="450.2" r="2.3"/>
<circle cx="716" cy="450.2" r="2.3"/>
<circle cx="667.1" cy="459.5" r="2.3"/>
<circle cx="679.8" cy="473.4" r="2.3"/>
<circle cx="688.2" cy="472.9" r="2.3"/>
<circle cx="718.3" cy="476" r="2.3"/>
<circle cx="739" cy="476" r="2.3"/>
<circle cx="879.7" cy="386.6" r="2.3"/>
<circle cx="901.8" cy="426.1" r="2.3"/>
<circle cx="889.5" cy="475.2" r="2.3"/>
</g></svg>
<div class="t" style="left:645.1px;top:353.4px;font-size:7.3px;line-height:9px;color:#1a1a1a;-webkit-text-stroke:0.1px #1a1a1a;">G106</div>
<div class="t" style="left:663.7px;top:347.6px;font-size:7.3px;line-height:9px;color:#1a1a1a;-webkit-text-stroke:0.1px #1a1a1a;">G104</div>
<div class="t" style="left:685.4px;top:347.3px;font-size:7.3px;line-height:9px;color:#1a1a1a;-webkit-text-stroke:0.1px #1a1a1a;">G204</div>
<div class="t" style="left:707.6px;top:347.3px;font-size:7.3px;line-height:9px;color:#1a1a1a;-webkit-text-stroke:0.1px #1a1a1a;">G209</div>
<div class="t" style="left:731.9px;top:347.3px;font-size:7.3px;line-height:9px;color:#1a1a1a;-webkit-text-stroke:0.1px #1a1a1a;">G210</div>
<div class="t" style="left:758.8px;top:347.3px;font-size:7.3px;line-height:9px;color:#1a1a1a;-webkit-text-stroke:0.1px #1a1a1a;">G211</div>
<div class="t" style="left:884.9px;top:347.5px;font-size:7.3px;line-height:9px;color:#1a1a1a;-webkit-text-stroke:0.1px #1a1a1a;">G302</div>
<div class="t" style="left:626.8px;top:383.0px;font-size:7.3px;line-height:9px;color:#1a1a1a;-webkit-text-stroke:0.1px #1a1a1a;">G105</div>
<div class="t" style="left:626.8px;top:404.2px;font-size:7.3px;line-height:9px;color:#1a1a1a;-webkit-text-stroke:0.1px #1a1a1a;">G207</div>
<div class="t" style="left:626.8px;top:433.2px;font-size:7.3px;line-height:9px;color:#1a1a1a;-webkit-text-stroke:0.1px #1a1a1a;">G205</div>
<div class="t" style="left:626.8px;top:445.5px;font-size:7.3px;line-height:9px;color:#1a1a1a;-webkit-text-stroke:0.1px #1a1a1a;">G208</div>
<div class="t" style="left:626.8px;top:459.2px;font-size:7.3px;line-height:9px;color:#1a1a1a;-webkit-text-stroke:0.1px #1a1a1a;">G101</div>
<div class="t" style="left:637.9px;top:481.2px;font-size:7.3px;line-height:9px;color:#1a1a1a;-webkit-text-stroke:0.1px #1a1a1a;">G102</div>
<div class="t" style="left:665.2px;top:498.3px;font-size:7.3px;line-height:9px;color:#1a1a1a;-webkit-text-stroke:0.1px #1a1a1a;">G103</div>
<div class="t" style="left:696.8px;top:503.5px;font-size:7.3px;line-height:9px;color:#1a1a1a;-webkit-text-stroke:0.1px #1a1a1a;">G201</div>
<div class="t" style="left:726.8px;top:503.5px;font-size:7.3px;line-height:9px;color:#1a1a1a;-webkit-text-stroke:0.1px #1a1a1a;">G202</div>
<div class="t" style="left:769.6px;top:503.1px;font-size:7.3px;line-height:9px;color:#1a1a1a;-webkit-text-stroke:0.1px #1a1a1a;">G206</div>
<div class="t" style="left:895.5px;top:503.4px;font-size:7.3px;line-height:9px;color:#1a1a1a;-webkit-text-stroke:0.1px #1a1a1a;">G301</div>
<div class="t" style="left:926.4px;top:421.7px;font-size:7.3px;line-height:9px;color:#1a1a1a;-webkit-text-stroke:0.1px #1a1a1a;">G401</div>
</div></body></html>
